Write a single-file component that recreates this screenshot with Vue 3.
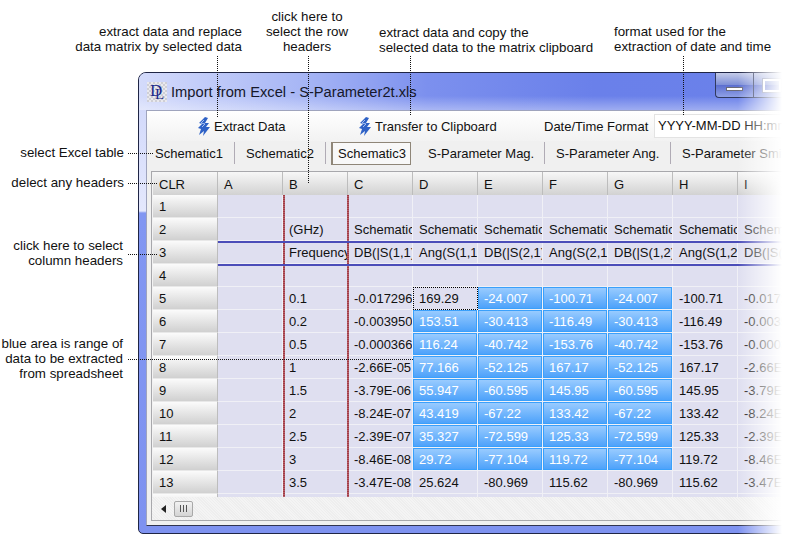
<script setup>
const tabs = [
  { label: 'Schematic1', w: 88, sep: true },
  { label: 'Schematic2', w: 91, sep: true },
  { label: 'Schematic3', w: 91, active: true },
  { label: 'S-Parameter Mag.', w: 128, sep: true },
  { label: 'S-Parameter Ang.', w: 126, sep: true },
  { label: 'S-Parameter Smith', w: 130 }
]
const cols = ['A', 'B', 'C', 'D', 'E', 'F', 'G', 'H', 'I', 'J']
const raw = [
  ['', '', '', '', '', '', '', '', '', ''],
  ['', '(GHz)', 'Schematic', 'Schematic', 'Schematic', 'Schematic', 'Schematic', 'Schematic', 'Schematic', ''],
  ['', 'Frequency', 'DB(|S(1,1)', 'Ang(S(1,1', 'DB(|S(2,1)', 'Ang(S(2,1', 'DB(|S(1,2)', 'Ang(S(1,2', 'DB(|S(2,2)', ''],
  ['', '', '', '', '', '', '', '', '', ''],
  ['', '0.1', '-0.017296', '169.29', '-24.007', '-100.71', '-24.007', '-100.71', '-0.017296', ''],
  ['', '0.2', '-0.0039504', '153.51', '-30.413', '-116.49', '-30.413', '-116.49', '-0.0039504', ''],
  ['', '0.5', '-0.0003662', '116.24', '-40.742', '-153.76', '-40.742', '-153.76', '-0.0003662', ''],
  ['', '1', '-2.66E-05', '77.166', '-52.125', '167.17', '-52.125', '167.17', '-2.66E-05', ''],
  ['', '1.5', '-3.79E-06', '55.947', '-60.595', '145.95', '-60.595', '145.95', '-3.79E-06', ''],
  ['', '2', '-8.24E-07', '43.419', '-67.22', '133.42', '-67.22', '133.42', '-8.24E-07', ''],
  ['', '2.5', '-2.39E-07', '35.327', '-72.599', '125.33', '-72.599', '125.33', '-2.39E-07', ''],
  ['', '3', '-8.46E-08', '29.72', '-77.104', '119.72', '-77.104', '119.72', '-8.46E-08', ''],
  ['', '3.5', '-3.47E-08', '25.624', '-80.969', '115.62', '-80.969', '115.62', '-3.47E-08', ''],
  ['', '', '', '', '', '', '', '', '', '']
]
function cellClass(r, c) {
  const row = r + 1
  const inCols = c >= 3 && c <= 6
  return {
    sel: inCols && row >= 5 && row <= 12 && !(row === 5 && c === 3),
    focus: row === 5 && c === 3
  }
}
const notes = [
  { cls: 'n-extract', lines: ['extract data and replace', 'data matrix by selected data'] },
  { cls: 'n-row', lines: ['click here to', 'select the row', 'headers'] },
  { cls: 'n-copy', lines: ['extract data and copy the', 'selected data to the matrix clipboard'] },
  { cls: 'n-format', lines: ['format used for the', 'extraction of date and time'] },
  { cls: 'n-table', lines: ['select Excel table'] },
  { cls: 'n-any', lines: ['delect any headers'] },
  { cls: 'n-col', lines: ['click here to select', 'column headers'] },
  { cls: 'n-blue', lines: ['blue area is range of', 'data to be extracted', 'from spreadsheet'] }
]
const leaders = ['v1', 'v2', 'v3', 'v4', 'h1', 'h2', 'h3', 'h4']
</script>

<template>
  <div class="page">
    <section class="window">
      <header class="titlebar">
        <span class="logo"><span class="logo-d">D</span><span class="logo-l">L</span></span>
        <span class="title">Import from Excel - S-Parameter2t.xls</span>
        <span class="caption-buttons">
          <span class="cap-btn"><i class="cap-min"></i></span>
          <span class="cap-btn"><i class="cap-max"></i></span>
        </span>
      </header>
      <div class="panel">
        <div class="toolbar">
          <span class="tool tool-extract">
            <svg class="bolt" width="14" height="19" viewBox="0 0 14 19"><path d="M8 0 L2 6 L5 7 L1 11 L4 12 L2 18 L7 14 L6 19 L13 10 L9 10 L12 6 L8 6 L11 1 Z" fill="#2f62c6"/><path d="M7 3 L4 6 L8 7 L5 10" fill="none" stroke="#a8c2f0" stroke-width="1"/></svg>
            Extract Data
          </span>
          <span class="tool tool-transfer">
            <svg class="bolt" width="14" height="19" viewBox="0 0 14 19"><path d="M8 0 L2 6 L5 7 L1 11 L4 12 L2 18 L7 14 L6 19 L13 10 L9 10 L12 6 L8 6 L11 1 Z" fill="#2f62c6"/><path d="M7 3 L4 6 L8 7 L5 10" fill="none" stroke="#a8c2f0" stroke-width="1"/></svg>
            Transfer to Clipboard
          </span>
          <span class="format-label">Date/Time Format</span>
          <span class="format-input">YYYY-MM-DD HH:mm:ss</span>
        </div>
        <nav class="tabs">
          <span v-for="t in tabs" :key="t.label" class="tab" :class="{ sep: t.sep, active: t.active }" :style="{ width: t.w + 'px' }"><span class="tab-label">{{ t.label }}</span></span>
        </nav>
        <div class="sheet">
          <div class="viewport">
            <div class="grid">
              <div class="corner">CLR</div>
              <div v-for="c in cols" :key="c" class="col-head">{{ c }}</div>
              <template v-for="(row, r) in raw" :key="r">
                <div class="row-head">{{ r + 1 }}</div>
                <div v-for="(v, c) in row" :key="c" class="cell" :class="cellClass(r, c)">{{ v }}</div>
              </template>
            </div>
            <i class="mark red red-1"></i>
            <i class="mark red red-2"></i>
            <i class="mark blue blue-1"></i>
            <i class="mark blue blue-2"></i>
          </div>
          <div class="scrollbar">
            <span class="arrow"></span>
            <span class="thumb"><i></i><i></i><i></i></span>
          </div>
        </div>
      </div>
    </section>
    <div class="fade"></div>
    <i v-for="l in leaders" :key="l" class="leader" :class="l"></i>
    <div v-for="n in notes" :key="n.cls" class="note" :class="n.cls">
      <div v-for="line in n.lines" :key="line">{{ line }}</div>
    </div>
  </div>
</template>

<style>
html, body { margin: 0; background: #fff; }
</style>

<style scoped>
.page {
  position: relative;
  width: 788px;
  height: 542px;
  overflow: hidden;
  background: #fff;
  box-sizing: border-box;
  padding: 72px 0 0 138px;
  font-family: "Liberation Sans", Arial, sans-serif;
  font-size: 13px;
  color: #111;
}
.window {
  box-sizing: border-box;
  width: 760px;
  height: 462px;
  border: 1px solid #1f2545;
  border-radius: 8px 8px 0 5px;
  padding: 0 7px 7px;
  display: flex;
  flex-direction: column;
  background: linear-gradient(to bottom, #cdd5fa 0, #e4e8fd 138px, #8297f2 140px, #7e92f0 100%);
}
.titlebar {
  height: 37px;
  flex: none;
  margin: 0 -7px;
  padding: 0 0 0 8px;
  display: flex;
  align-items: center;
  border-radius: 7px 7px 0 0;
  background:
    linear-gradient(to bottom, rgba(255,255,255,0) 62%, rgba(255,255,255,.35) 100%),
    linear-gradient(to right, #d4dbfb 0, #a6b5f5 22%, #7c90ee 38%, #6a80ea 60%, #6b82ea 100%);
}
.logo {
  position: relative;
  width: 20px;
  height: 20px;
  flex: none;
  background: repeating-conic-gradient(#cfcfd6 0 25%, #e9e9ee 0 50%) 0 0 / 4px 4px;
  font-family: "Liberation Serif", serif;
  color: #1c2a8a;
  font-size: 17px;
  line-height: 20px;
  overflow: hidden;
}
.logo-d { position: absolute; left: 3px; top: -1px; }
.logo-l { position: absolute; left: 8px; top: 2px; font-size: 15px; }
.title {
  margin-left: 4px;
  font-size: 14.7px;
  white-space: nowrap;
  color: #16182a;
}
.caption-buttons {
  position: absolute;
  left: 715px;
  top: 73px;
  display: flex;
}
.cap-btn {
  width: 38px;
  height: 25px;
  box-sizing: border-box;
  border: 1px solid #30395f;
  border-top: 0;
  display: flex;
  align-items: center;
  justify-content: center;
  background: linear-gradient(to bottom, #c4cbe8, #7f90d8 48%, #5c6fd0 52%, #8fa0e6);
}
.cap-btn:first-child { border-radius: 0 0 0 4px; border-right: 0; }
.cap-min {
  display: block;
  width: 17px;
  height: 4px;
  margin-top: 8px;
  background: #fff;
  border: 1px solid #6a6a78;
  box-sizing: border-box;
}
.cap-max {
  display: block;
  width: 18px;
  height: 13px;
  box-sizing: border-box;
  border: 2px solid #fff;
  outline: 1px solid #8088a8;
}
.panel {
  flex: 1;
  min-height: 0;
  box-sizing: border-box;
  border: 1px solid #9fa4bd;
  border-bottom-color: #30344f;
  background: #f0f0f0;
  display: flex;
  flex-direction: column;
  padding-bottom: 4px;
}
.toolbar {
  position: relative;
  height: 30px;
  flex: none;
  background: linear-gradient(to bottom, #fff, #f2f2f2);
  display: flex;
  align-items: center;
  padding-left: 50px;
  box-sizing: border-box;
  white-space: nowrap;
}
.tool { display: inline-flex; align-items: center; gap: 3px; }
.tool-extract { width: 161px; }
.tool-transfer { width: 186px; }
.bolt { flex: none; }
.format-label { width: 110px; flex: none; }
.format-input {
  width: 160px;
  height: 24px;
  line-height: 22px;
  box-sizing: border-box;
  flex: none;
  background: #fff;
  border: 1px solid #e3e3e3;
  padding-left: 3px;
  overflow: hidden;
}
.tabs {
  height: 24px;
  flex: none;
  display: flex;
  background: #f0f0f0;
  box-sizing: border-box;
  white-space: nowrap;
}
.tab {
  box-sizing: border-box;
  flex: none;
  display: flex;
  align-items: center;
  padding-left: 11px;
}
.tab:first-child { padding-left: 8px; }
.tab.sep { border-right: 1px solid #b0abb5; margin: 1px 0; }
.tab.active { padding-left: 5px; }
.tab.active .tab-label {
  display: block;
  box-sizing: border-box;
  width: 80px;
  height: 23px;
  line-height: 22px;
  padding-left: 5px;
  border: 1px solid #8f8678;
  border-width: 1px 1px 1px 2px;
  background: #f8f8f8;
  overflow: hidden;
}
.sheet {
  flex: none;
  margin: 6px 0 0 4px;
  height: 350px;
  box-sizing: border-box;
  border: 1px solid #a8a8ac;
  display: flex;
  flex-direction: column;
  background: #f2f2f2;
}
.viewport {
  position: relative;
  height: 325px;
  flex: none;
  overflow: hidden;
  padding-left: 1px;
}
.grid {
  display: grid;
  grid-template-columns: repeat(11, 65px);
  grid-template-rows: 23px;
  grid-auto-rows: 23px;
  width: 715px;
}
.corner, .col-head {
  box-sizing: border-box;
  padding-left: 6px;
  line-height: 25px;
  border-right: 1px solid #bdbdbd;
  background: linear-gradient(to bottom, #f7f7f7, #d2d2d2);
}
.row-head {
  box-sizing: border-box;
  padding-left: 6px;
  line-height: 24px;
  border-right: 1px solid #bdbdbd;
  border-bottom: 1px solid #e8e8e8;
  background: linear-gradient(to bottom, #fbfbfb, #d0d0d0);
}
.cell {
  box-sizing: border-box;
  padding-left: 6px;
  line-height: 24px;
  white-space: nowrap;
  overflow: hidden;
  border-right: 1px solid #f0f0f6;
  border-bottom: 1px solid #f0f0f6;
  background: #dfdff0;
  background-clip: padding-box;
}
.cell.sel {
  color: #fff;
  background-image: linear-gradient(to bottom, #9ccdff, #4aa0fa);
  box-shadow: inset 0 0 0 1px #3aa0fb;
}
.cell.focus {
  outline: 1px dotted #000;
  outline-offset: -1px;
}
.mark { position: absolute; display: block; }
.red {
  top: 23px;
  bottom: 0;
  width: 2px;
  background: repeating-linear-gradient(to bottom, #a33c46 0 1px, #b4606a 1px 2px);
}
.red-1 { left: 131px; }
.red-2 { left: 195px; }
.blue { left: 66px; right: 0; height: 2px; background: #4b4db9; }
.blue-1 { top: 69px; }
.blue-2 { top: 92px; }
.scrollbar {
  flex: 1;
  position: relative;
  display: flex;
  align-items: center;
  padding-left: 9px;
  background: repeating-linear-gradient(45deg, #eeeeee 0 1px, #f4f4f4 1px 2px);
}
.arrow {
  width: 0;
  height: 0;
  border: 4px solid transparent;
  border-right: 5px solid #222;
  border-left: 0;
}
.thumb {
  margin-left: 8px;
  width: 19px;
  height: 16px;
  box-sizing: border-box;
  border: 1px solid #a8a8a8;
  border-radius: 2px;
  background: linear-gradient(to bottom, #f2f2f2, #d4d4d4);
  display: flex;
  align-items: center;
  justify-content: center;
  gap: 2px;
}
.thumb i { display: block; width: 1px; height: 7px; background: #555; }
.fade {
  position: absolute;
  inset: 60px 0 0 0;
  pointer-events: none;
  background: linear-gradient(to right, rgba(255,255,255,0) 738px, #fff 782px);
}
.note {
  position: absolute;
  font-size: 13.33px;
  line-height: 15px;
  white-space: nowrap;
  color: #111;
}
.n-extract { right: 546px; top: 24px; text-align: right; }
.n-row { left: 247px; width: 120px; top: 9px; text-align: center; }
.n-copy { left: 379px; top: 25px; }
.n-format { left: 614px; top: 24px; }
.n-table { right: 664px; top: 145px; }
.n-any { right: 664px; top: 175px; }
.n-col { right: 665px; top: 238px; text-align: right; }
.n-blue { right: 665px; top: 336px; text-align: right; }
.leader { position: absolute; display: block; }
.v1, .v2, .v3, .v4 { width: 0; top: 56px; border-left: 1px dotted #111; }
.v1 { left: 217px; height: 61px; }
.v2 { left: 308px; height: 127px; }
.v3 { left: 410px; height: 59px; }
.v4 { left: 683px; height: 59px; }
.h1, .h2, .h3, .h4 { height: 0; left: 128px; border-top: 1px dotted #111; }
.h1 { top: 153px; width: 25px; }
.h2 { top: 183px; width: 29px; }
.h3 { top: 254px; width: 29px; }
.h4 { top: 359px; width: 285px; }
</style>
